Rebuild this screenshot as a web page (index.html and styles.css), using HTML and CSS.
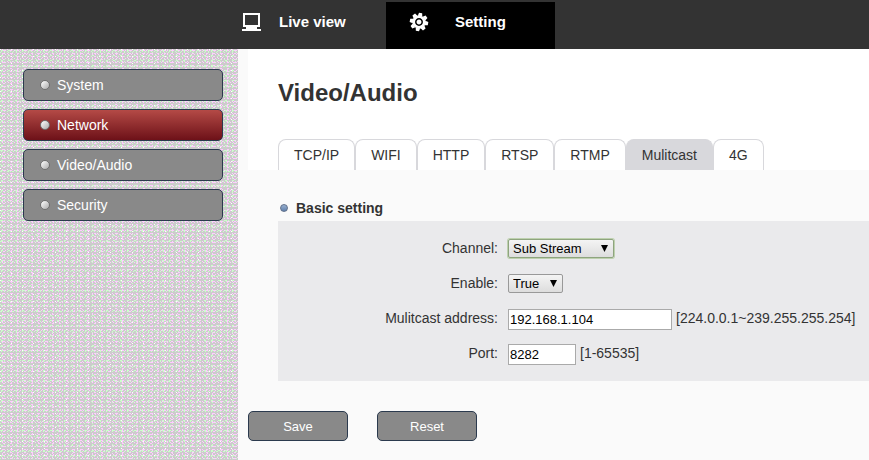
FILE: index.html
```html
<!DOCTYPE html>
<html lang="en">
<head>
<meta charset="utf-8">
<title>Video/Audio</title>
<link rel="stylesheet" href="styles.css">
</head>
<body>
<header class="topbar">
  <nav class="topnav">
    <a class="topnav-item" href="#live">
      <svg class="topnav-icon" viewBox="0 0 20 20" width="20" height="20" aria-hidden="true" shape-rendering="crispEdges">
        <path fill="#fff" fill-rule="evenodd" d="M2 1h17v14h-3v2h4v2H1v-2h4v-2H2zM4 3v10h13V3z"/>
      </svg>
      <span>Live view</span>
    </a>
    <a class="topnav-item topnav-item--active" href="#setting">
      <svg class="topnav-icon" viewBox="-10 -10 20 20" width="20" height="20" aria-hidden="true">
        <g transform="rotate(10)" fill="#fff">
          <circle r="6.6"/>
          <path id="tooth" d="M-2.3-6 -1.6-9.2H1.6L2.3-6z"/>
          <use href="#tooth" transform="rotate(45)"/>
          <use href="#tooth" transform="rotate(90)"/>
          <use href="#tooth" transform="rotate(135)"/>
          <use href="#tooth" transform="rotate(180)"/>
          <use href="#tooth" transform="rotate(225)"/>
          <use href="#tooth" transform="rotate(270)"/>
          <use href="#tooth" transform="rotate(315)"/>
        </g>
        <circle r="3.2" fill="#fff" stroke="#000" stroke-width="1.5"/>
      </svg>
      <span>Setting</span>
    </a>
  </nav>
</header>
<div class="layout">
  <nav class="sidebar">
    <a class="side-link" href="#system">System</a>
    <a class="side-link side-link--active" href="#network">Network</a>
    <a class="side-link" href="#video">Video/Audio</a>
    <a class="side-link" href="#security">Security</a>
  </nav>
  <main class="content">
    <div class="page-head">
      <h1>Video/Audio</h1>
      <nav class="tabs">
        <a class="tab" href="#tcpip">TCP/IP</a>
        <a class="tab" href="#wifi">WIFI</a>
        <a class="tab" href="#http">HTTP</a>
        <a class="tab" href="#rtsp">RTSP</a>
        <a class="tab" href="#rtmp">RTMP</a>
        <a class="tab tab--active" href="#mulitcast">Mulitcast</a>
        <a class="tab" href="#4g">4G</a>
      </nav>
    </div>
    <form class="settings">
      <h2>Basic setting</h2>
      <div class="panel">
        <div class="row">
          <label for="channel">Channel:</label>
          <div class="field"><span class="select select--focus"><select id="channel"><option>Sub Stream</option></select></span></div>
        </div>
        <div class="row">
          <label for="enable">Enable:</label>
          <div class="field"><span class="select"><select id="enable" class="short"><option>True</option></select></span></div>
        </div>
        <div class="row">
          <label for="address">Mulitcast address:</label>
          <div class="field"><input id="address" class="address" type="text" value="192.168.1.104"><span>[224.0.0.1~239.255.255.254]</span></div>
        </div>
        <div class="row">
          <label for="port">Port:</label>
          <div class="field"><input id="port" class="port" type="text" value="8282"><span>[1-65535]</span></div>
        </div>
      </div>
      <div class="actions">
        <button class="btn" type="button">Save</button>
        <button class="btn" type="reset">Reset</button>
      </div>
    </form>
  </main>
</div>
</body>
</html>
```
FILE: styles.css
```css
*, *::before, *::after { box-sizing: border-box; }

body {
  margin: 0;
  min-height: 100vh;
  display: flex;
  flex-direction: column;
  background: #fafafa;
  color: #333;
  font: 14px/20px "Liberation Sans", Arial, sans-serif;
}

a { color: inherit; text-decoration: none; }

.topbar { background: #333; padding: 2px 0 0 217px; }
.topnav { display: flex; }
.topnav-item {
  display: flex;
  gap: 18px;
  width: 169px;
  height: 47px;
  padding: 10px 24px;
  color: #fff;
  font-size: 15px;
  font-weight: bold;
}
.topnav-item--active { background: #000; gap: 26px; padding-left: 23px; }
.topnav-icon { flex: none; }

.layout { display: flex; flex: 1; }

/* Speckled texture built from tiled one-pixel marks */
.sidebar {
  flex: none;
  width: 238px;
  padding: 20px 15px 20px 23px;
  display: flex;
  flex-direction: column;
  gap: 8px;
  background-color: #ccc;
  background-image:
    conic-gradient(from 270deg at 1px 1px, #fff 25%, transparent 0),
    conic-gradient(from 270deg at 2px 1px, #cfc 25%, transparent 0),
    conic-gradient(from 270deg at 1px 1px, #fcf 25%, transparent 0),
    conic-gradient(from 270deg at 1px 1px, #cfc 25%, transparent 0),
    conic-gradient(from 270deg at 2px 1px, #fcf 25%, transparent 0),
    conic-gradient(from 270deg at 1px 1px, #cfc 25%, transparent 0),
    conic-gradient(from 270deg at 1px 1px, #fcf 25%, transparent 0);
  background-size: 11px 7px, 7px 5px, 5px 4px, 4px 7px, 7px 3px, 3px 5px, 3px 4px;
  background-position: 0 0, 1px 1px, 2px 0, 0 3px, 3px 1px, 1px 2px, 2px 1px;
}

.side-link {
  height: 32px;
  padding: 0 16px;
  display: flex;
  align-items: center;
  gap: 7px;
  border: 1px solid #2b3a4e;
  border-radius: 5px;
  background: #898989;
  color: #fff;
}
.side-link::before {
  content: "";
  width: 10px;
  height: 10px;
  border: 1px solid #707070;
  border-radius: 50%;
  background: linear-gradient(135deg, #fff, #aaa);
}
.side-link--active { background: linear-gradient(#b44a46, #6d1118); }

.content { flex: 1; min-width: 0; padding-left: 10px; }
.page-head { background: #fff; padding: 28px 0 0 30px; }
h1 { margin: 0 0 30px; font-size: 24px; line-height: 32px; }

.tabs { display: flex; }
.tab {
  height: 31px;
  padding: 5px 15px;
  border: 1px solid #d8d8dc;
  border-bottom: 0;
  border-radius: 8px 8px 0 0;
  white-space: nowrap;
}
.tab--active { background: #d8d8dc; }

h2 {
  margin: 28px 0 3px 32px;
  display: flex;
  align-items: center;
  gap: 8px;
  font-size: 14px;
  line-height: 20px;
}
h2::before {
  content: "";
  width: 8px;
  height: 8px;
  border: 1px solid #60708a;
  border-radius: 50%;
  background: linear-gradient(#98b0d0, #6080ac);
}

.panel {
  margin-left: 30px;
  padding: 9px 0 11px;
  background: #eaeaec;
}
.row {
  display: grid;
  grid-template-columns: 220px 1fr;
  column-gap: 10px;
  align-items: center;
  height: 35px;
}
.row label { text-align: right; }
.field { display: flex; align-items: center; gap: 4px; white-space: nowrap; }

input, select {
  border: 1px solid #aaa;
  color: #000;
  font: 13px "Liberation Sans", Arial, sans-serif;
}
input { height: 21px; margin: 4px 0 0; padding: 1px; background: #fff; }
.address { width: 164px; }
.port { width: 68px; }

.select { position: relative; display: flex; margin-top: 2px; }
.select::after {
  content: "";
  position: absolute;
  top: 6px;
  right: 6px;
  width: 7px;
  height: 7px;
  background: #000;
  clip-path: polygon(0 0, 100% 0, 50% 100%);
  pointer-events: none;
}
select {
  appearance: none;
  width: 106px;
  height: 19px;
  margin: 0;
  padding: 0 4px;
  border-color: #999;
  border-radius: 2px;
  background: linear-gradient(#f4f4f4, #ddd);
}
.short { width: 55px; }
.select--focus select { border-color: #8ea47e; box-shadow: 0 0 0 1px #bdd0ae; }

.actions { display: flex; gap: 29px; margin: 30px 0 19px; }
.btn {
  width: 100px;
  height: 30px;
  padding: 0;
  border: 1px solid #2b3a4e;
  border-radius: 5px;
  background: #898989;
  color: #fff;
  font: 13px "Liberation Sans", Arial, sans-serif;
}
```
